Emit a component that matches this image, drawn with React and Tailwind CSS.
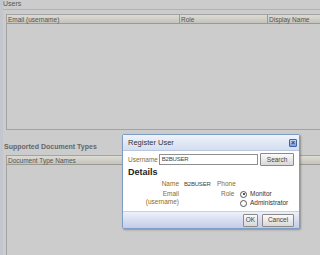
import React from 'react';

const font = { fontFamily: '"Liberation Sans", Arial, sans-serif' };

function Radio({ checked }) {
  return (
    <span className="relative inline-block h-[7px] w-[7px] rounded-full border border-[#555] bg-white">
      {checked && <span className="absolute left-[1.5px] top-[1.5px] h-[2px] w-[2px] rounded-full bg-[#222]" />}
    </span>
  );
}

function RegisterDialog() {
  return (
    <div className="absolute left-[122px] top-[134px] flex h-[95px] w-[178px] flex-col rounded-[2px] border border-[#7f9cc4] bg-white shadow-[1px_1px_2px_rgba(0,0,0,0.3)]">
      <div className="flex h-[16px] items-center justify-between border-b border-[#b9c7de] bg-gradient-to-b from-[#eef3fb] to-[#d4def0] pl-[5px] pr-[2px]">
        <span className="text-[7.5px] text-[#333]">Register User</span>
        <span className="flex h-[8px] w-[8px] items-center justify-center rounded-[1px] border border-[#3d63a8] bg-gradient-to-b from-[#c9d8f2] to-[#7e9fd6] text-[7px] font-bold leading-none text-[#1c3d7a]">×</span>
      </div>
      <div className="flex flex-1 flex-col px-[5px] pt-[2px]">
        <div className="flex h-[13px] items-center">
          <span className="w-[31px] text-[6.5px] text-[#8a6a2a]">Username</span>
          <div className="flex h-[11px] w-[100px] items-center border border-[#8e8e8e] px-[2px] text-[6px] tracking-[-0.2px] text-[#444]">B2BUSER</div>
          <div className="ml-[2px] flex h-[13px] w-[34px] items-center justify-center rounded-[1px] border border-[#8a8a8a] bg-gradient-to-b from-[#fbfbfb] to-[#d8d8d8] text-[6.5px] text-[#444]">Search</div>
        </div>
        <div className="mt-[1px] text-[9px] font-bold leading-[11px] text-[#222]">Details</div>
        <div className="mt-[2px] flex text-[6.5px]">
          <div className="flex w-[51px] flex-col items-end text-right text-[#8a6a2a] leading-[8px]">
            <span>Name</span>
            <span className="mt-[2px]">Email</span>
            <span>(username)</span>
          </div>
          <div className="ml-[5px] w-[33px] shrink-0 text-[6px] tracking-[-0.2px] leading-[8px] text-[#444]">B2BUSER</div>
          <div className="flex flex-col leading-[8px]">
            <span className="text-[#8a6a2a]">Phone</span>
            <div className="mt-[2px] flex items-start">
              <span className="ml-[4px] w-[16px] text-[#8a6a2a]">Role</span>
              <div className="ml-[3px] flex flex-col gap-[1px] text-[#333]">
                <span className="flex items-center gap-[3px]"><Radio checked />Monitor</span>
                <span className="flex items-center gap-[3px]"><Radio />Administrator</span>
              </div>
            </div>
          </div>
        </div>
      </div>
      <div className="flex h-[17px] items-center justify-end gap-[4px] border-t border-[#c6cfe6] bg-gradient-to-b from-[#eef1fa] to-[#c3cbe8] pr-[5px]">
        <div className="flex h-[13px] w-[15px] items-center justify-center rounded-[1px] border border-[#8a8a8a] bg-gradient-to-b from-[#fbfbfb] to-[#d8d8d8] text-[6.5px] text-[#444]">OK</div>
        <div className="flex h-[13px] w-[32px] items-center justify-center rounded-[1px] border border-[#8a8a8a] bg-gradient-to-b from-[#fbfbfb] to-[#d8d8d8] text-[6.5px] text-[#444]">Cancel</div>
      </div>
    </div>
  );
}

export default function App() {
  return (
    <div className="relative h-[255px] w-[320px] overflow-hidden bg-[#cccccc]" style={font}>
      <div className="flex h-full flex-col border-l-[3px] border-[#c3c6cc]">
        <div className="flex h-[10px] items-center border-b border-[#b3b3b3] text-[7px] text-[#555]">Users</div>
        <div className="ml-[3px] mt-[4px] flex h-[116px] flex-col border border-[#a3a3a3] border-r-0">
          <div className="flex h-[9px] border-b border-[#9a9a92] bg-gradient-to-b from-[#dcdcd4] to-[#c4c4bc] text-[6.5px] leading-[9px] text-[#555]">
            <span className="w-[173px] border-r border-[#9a9a92] pl-[1px]">Email (username)</span>
            <span className="w-[88px] border-r border-[#9a9a92] pl-[1px]">Role</span>
            <span className="pl-[1px]">Display Name</span>
          </div>
        </div>
        <div className="mt-[12px] pl-[1px] text-[7px] font-bold text-[#666]">Supported Document Types</div>
        <div className="ml-[3px] mt-[2px] flex flex-1 flex-col border border-[#a3a3a3] border-r-0 border-b-0">
          <div className="flex h-[9px] border-b border-[#9a9a92] bg-gradient-to-b from-[#dcdcd4] to-[#c4c4bc] text-[6.5px] leading-[9px] text-[#555]">
            <span className="pl-[1px]">Document Type Names</span>
          </div>
        </div>
      </div>
      <RegisterDialog />
    </div>
  );
}
